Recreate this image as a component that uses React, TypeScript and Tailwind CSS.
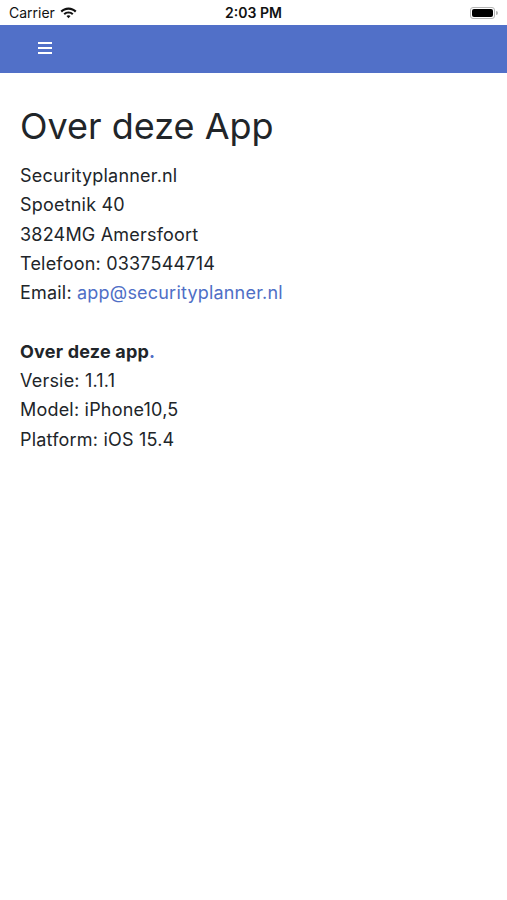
import React from "react";

export default function App() {
  const font = { fontFamily: 'Inter, "Liberation Sans", sans-serif' };
  return (
    <div className="w-[507px] min-h-[900px] bg-white text-[#212529]" style={font}>
      {/* status bar */}
      <div className="h-[25px] flex items-center justify-between px-[9px] relative">
        <div className="flex items-center gap-[5px]">
          <span className="text-[14px] leading-none text-[#111]">Carrier</span>
          <svg width="17" height="12" viewBox="0 0 17 12">
            <path d="M8.5 0.5C5.3 0.5 2.5 1.8 0.5 3.8L2 5.4C3.6 3.8 5.9 2.7 8.5 2.7C11.1 2.7 13.4 3.8 15 5.4L16.5 3.8C14.5 1.8 11.7 0.5 8.5 0.5Z" fill="#111" />
            <path d="M8.5 4.4C6.6 4.4 4.8 5.1 3.5 6.4L5 8C5.9 7.1 7.1 6.6 8.5 6.6C9.9 6.6 11.1 7.1 12 8L13.5 6.4C12.2 5.1 10.4 4.4 8.5 4.4Z" fill="#111" />
            <path d="M8.5 8.3C7.7 8.3 7 8.6 6.5 9.1L8.5 11.3L10.5 9.1C10 8.6 9.3 8.3 8.5 8.3Z" fill="#111" />
          </svg>
        </div>
        <span className="absolute left-1/2 -translate-x-1/2 text-[14px] font-semibold leading-none text-[#111]">2:03 PM</span>
        <div className="flex items-center">
          <div className="w-[25px] h-[12px] rounded-[3px] border border-[#b5b5b5] p-[1px]">
            <div className="w-full h-full rounded-[2px] bg-black" />
          </div>
          <div className="w-[2px] h-[4px] rounded-r-sm bg-[#b5b5b5] ml-[1px]" />
        </div>
      </div>
      {/* nav bar */}
      <div className="h-[48px] bg-[#5170c8] flex items-center pl-[38px]">
        <div className="flex flex-col gap-[3px] w-[14px] -mt-[2px]">
          <div className="h-[2px] bg-white" />
          <div className="h-[2px] bg-white" />
          <div className="h-[2px] bg-white" />
        </div>
      </div>
      {/* content */}
      <div className="px-[20px] pt-[32px]">
        <h1 className="text-[36px] leading-[43px] font-normal text-[#212529] mb-[13px]">Over deze App</h1>
        <div className="text-[18px] leading-[29.3px] tracking-[0.2px]">
          <div>Securityplanner.nl</div>
          <div>Spoetnik 40</div>
          <div>3824MG Amersfoort</div>
          <div>Telefoon: 0337544714</div>
          <div>
            Email: <span className="text-[#4f6fc6]">app@securityplanner.nl</span>
          </div>
          <div>&nbsp;</div>
          <div>
            <span className="font-bold">Over deze app</span>
            <span className="text-[#4f6fc6] font-bold">.</span>
          </div>
          <div>Versie: 1.1.1</div>
          <div>Model: iPhone10,5</div>
          <div>Platform: iOS 15.4</div>
        </div>
      </div>
    </div>
  );
}
